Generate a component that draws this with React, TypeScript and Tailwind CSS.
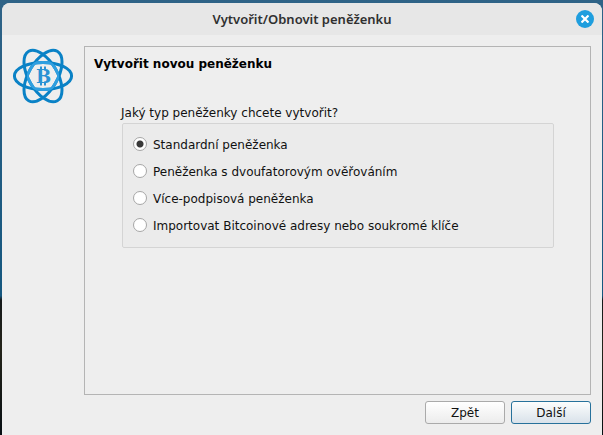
import { useState } from 'react';

const WALLET_TYPES = [
    { id: 'standard', label: 'Standardní peněženka' },
    { id: '2fa', label: 'Peněženka s dvoufatorovým ověřováním' },
    { id: 'multisig', label: 'Více-podpisová peněženka' },
    { id: 'imported', label: 'Importovat Bitcoinové adresy nebo soukromé klíče' },
];

function Orbits() {
    return (
        <>
            <ellipse cx="31" cy="28" rx="28.6" ry="13.6" />
            <ellipse cx="31" cy="28" rx="28.6" ry="14.4" transform="rotate(60 31 28)" />
            <ellipse cx="31" cy="28" rx="28.6" ry="14.4" transform="rotate(120 31 28)" />
        </>
    );
}

function WalletLogo() {
    return (
        <svg viewBox="0 0 62 56" className="w-[62px] h-14" fill="none" aria-hidden="true">
            <defs>
                <clipPath id="core">
                    <circle cx="31" cy="28" r="16" />
                </clipPath>
            </defs>
            <g stroke="#0a82c6" strokeWidth="3">
                <Orbits />
            </g>
            {/* Orbits get lighter around the coin sign */}
            <g stroke="#2f9fe0" strokeWidth="3" clipPath="url(#core)">
                <Orbits />
            </g>
            {/* Coin sign */}
            <path d="M29 18.4v4M33 18.4v4M29 33.6v4M33 33.6v4" stroke="#2a92d4" strokeWidth="2" />
            <text
                x="31.5"
                y="34.5"
                textAnchor="middle"
                fill="#2a92d4"
                className="font-['DejaVu_Serif',serif] text-[18px] font-bold"
            >
                B
            </text>
        </svg>
    );
}

export default function App() {
    const [walletType, setWalletType] = useState('standard');

    return (
        <div className="min-h-screen flex flex-col pt-[3px] pl-[2px] pr-px bg-[linear-gradient(#2f6387_0%,#15577f_68%,#15191a_69%,#24241a_80%,#080f13_100%)] font-['DejaVu_Sans',sans-serif] text-[12px] leading-4 text-[#111111]">
            <div className="flex-1 flex flex-col rounded-t-lg bg-[#eeeeee] overflow-hidden">
                {/* Title bar */}
                <header className="grid grid-cols-[1fr_auto_1fr] items-center h-8 px-2 bg-[#e7e7e7]">
                    <h1 className="col-start-2 font-['Noto_Sans',sans-serif] text-[13px] font-semibold text-[#303030]">
                        Vytvořit/Obnovit peněženku
                    </h1>
                    <button
                        type="button"
                        aria-label="Zavřít"
                        className="justify-self-end flex items-center justify-center size-[18px] rounded-full bg-[#1f9ede]"
                    >
                        <svg viewBox="0 0 8 8" className="size-2" stroke="#ffffff" strokeWidth="2.2">
                            <path d="M0.5 0.5L7.5 7.5M7.5 0.5L0.5 7.5" />
                        </svg>
                    </button>
                </header>

                <form
                    className="flex-1 flex flex-col gap-[6px] px-[11px] pt-[11px] pb-[11px]"
                    onSubmit={(e) => e.preventDefault()}
                >
                    <div className="flex-1 flex items-stretch gap-[10px]">
                        <div className="shrink-0 -ml-px pt-[2px]">
                            <WalletLogo />
                        </div>
                        <main className="flex-1 border border-[#b4b4b4] px-[9px] pt-[9px]">
                            <h2 className="text-[12px] font-bold text-black">Vytvořit novou peněženku</h2>
                            <fieldset className="mt-[33px] mx-[27px]">
                                <legend className="pb-[2px]">Jaký typ peněženky chcete vytvořit?</legend>
                                <div className="flex flex-col gap-[10px] ml-px border border-[#d4d4d4] rounded-[2px] bg-[#ebebeb] px-[10px] pt-3 pb-[13px]">
                                    {WALLET_TYPES.map((type) => (
                                        <label key={type.id} className="flex items-start gap-[6px]">
                                            <input
                                                type="radio"
                                                name="walletType"
                                                value={type.id}
                                                checked={walletType === type.id}
                                                onChange={() => setWalletType(type.id)}
                                                className="appearance-none size-[14px] mt-px shrink-0 rounded-full border border-[#a6a6a6] bg-white checked:bg-[radial-gradient(circle,#3a3a3a_3px,#ffffff_4px)]"
                                            />
                                            <span className="pt-px">{type.label}</span>
                                        </label>
                                    ))}
                                </div>
                            </fieldset>
                        </main>
                    </div>

                    {/* Navigation */}
                    <footer className="flex justify-end gap-[6px]">
                        <button
                            type="button"
                            className="w-20 h-[23px] rounded-[3px] border border-[#aaaaaa] bg-linear-to-b from-white to-[#ececec]"
                        >
                            Zpět
                        </button>
                        <button
                            type="submit"
                            className="w-20 h-[23px] rounded-[3px] border border-[#27719b] bg-linear-to-b from-[#fcfdfd] to-[#d9e2ea]"
                        >
                            Další
                        </button>
                    </footer>
                </form>
            </div>
        </div>
    );
}
